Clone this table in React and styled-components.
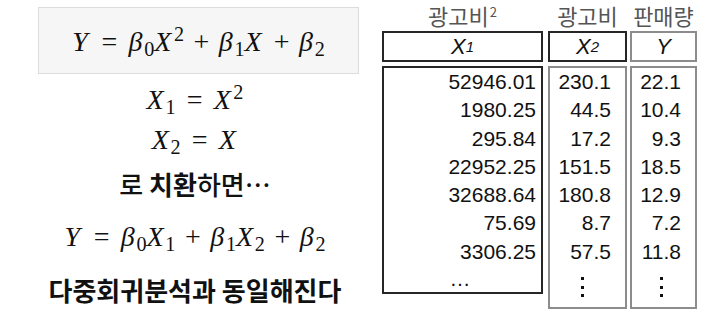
import React from 'react'
import styled, { createGlobalStyle } from 'styled-components'

const GlobalStyle = createGlobalStyle`
  body {
    margin: 0;
    background: #fff;
  }
`

const Page = styled.div`
  width: 713px;
  height: 327px;
  display: flex;
  overflow: hidden;
`

// left side: formulas and explanation
const Left = styled.div`
  width: 382px;
  display: flex;
  flex-direction: column;
  align-items: center;
  padding: 7px 0 0 8px;
  box-sizing: border-box;
`

const FormulaBox = styled.div`
  width: 321px;
  height: 67px;
  box-sizing: border-box;
  margin-left: 7px;
  background: #f6f6f6;
  border: 1px solid #dcdcdc;
  display: flex;
  align-items: center;
  justify-content: center;
  padding-top: 2px;
`

const MathLine = styled.div`
  font-family: "Liberation Serif", "DejaVu Serif", serif;
  font-size: 28px;
  color: #111;
  white-space: nowrap;
  height: ${p => p.$h}px;
  line-height: ${p => p.$h}px;
  margin-top: ${p => p.$mt || 0}px;
`

const V = styled.i`
  font-style: italic;
  margin-right: 0.09em;
`

const Sub = styled.sub`
  font-size: 0.72em;
  font-style: normal;
  vertical-align: -0.26em;
  line-height: 0;
  margin-left: -0.04em;
`

const Sup = styled.sup`
  font-size: 0.72em;
  font-style: normal;
  vertical-align: 0.52em;
  line-height: 0;
`

const Op = styled.span`
  margin: 0 ${p => (p.$rel ? '0.4em' : '0.34em')};
`

const KoLine = styled.div`
  font-family: "Noto Sans CJK KR", "Noto Sans", sans-serif;
  font-size: ${p => p.$size || 26}px;
  font-weight: ${p => p.$weight || 500};
  color: #111;
  white-space: nowrap;
  margin-top: ${p => p.$mt || 0}px;
  line-height: 1.2;
`

const Strong = styled.b`
  font-weight: 700;
`

// right side: the data table
const Table = styled.div`
  display: flex;
  align-items: flex-start;
  padding-top: 3px;
`

const Column = styled.div`
  width: ${p => p.$w}px;
  margin-left: ${p => p.$gap || 0}px;
  display: flex;
  flex-direction: column;
`

const Title = styled.div`
  height: 28px;
  line-height: 24px;
  text-align: center;
  font-family: "Noto Sans CJK KR", "Noto Sans", sans-serif;
  font-size: 22px;
  color: #555;
  white-space: nowrap;
`

const TitleSup = styled.sup`
  font-size: 13px;
  vertical-align: 8px;
  line-height: 0;
  margin-left: 1px;
`

const HeadCell = styled.div`
  height: 31px;
  box-sizing: border-box;
  border: 2px solid ${p => (p.$dark ? '#262626' : '#8c8c8c')};
  display: flex;
  align-items: center;
  justify-content: center;
  font-family: "Liberation Sans", Arial, sans-serif;
  font-style: italic;
  font-size: 22px;
  color: #111;
  padding-top: 1px;
`

const HeadSub = styled.sub`
  font-size: 15px;
  vertical-align: -5px;
  line-height: 0;
`

const Body = styled.div`
  margin-top: 4px;
  box-sizing: border-box;
  border: 2px solid ${p => (p.$dark ? '#262626' : '#8c8c8c')};
  padding: 0 ${p => p.$pr}px ${p => p.$pb || 0}px 0;
  font-family: "Liberation Sans", Arial, sans-serif;
  font-size: 21px;
  color: #111;
`

const Cell = styled.div`
  height: 28.3px;
  line-height: 28.3px;
  text-align: right;
`

const Ellipsis = styled.div`
  height: 26px;
  line-height: 26px;
  text-align: center;
`

const VDots = styled.div`
  display: flex;
  flex-direction: column;
  align-items: center;
  gap: 5.5px;
  padding: 11px 0 0 ${p => p.$pl || 0}px;

  & > span {
    width: 3px;
    height: 3px;
    background: #111;
  }
`

const cols = [
  { title: '광고비', sup: '2', head: '1', w: 161, gap: 0, pr: 5, dark: true,
    rows: ['52946.01', '1980.25', '295.84', '22952.25', '32688.64', '75.69', '3306.25'] },
  { title: '광고비', head: '2', w: 79, gap: 5, pr: 14, dark: false, headDark: true,
    rows: ['230.1', '44.5', '17.2', '151.5', '180.8', '8.7', '57.5'] },
  { title: '판매량', head: null, w: 67, gap: 3, pr: 14, dark: false,
    rows: ['22.1', '10.4', '9.3', '18.5', '12.9', '7.2', '11.8'] },
]

export default function App() {
  return (
    <Page>
      <GlobalStyle />
      <Left>
        <FormulaBox>
          <MathLine $h={40}>
            <V>Y</V><Op $rel>=</Op><V>β</V><Sub>0</Sub><V>X</V><Sup>2</Sup>
            <Op>+</Op><V>β</V><Sub>1</Sub><V>X</V><Op>+</Op><V>β</V><Sub>2</Sub>
          </MathLine>
        </FormulaBox>
        <MathLine $h={40} $mt={6}>
          <V>X</V><Sub>1</Sub><Op $rel>=</Op><V>X</V><Sup>2</Sup>
        </MathLine>
        <MathLine $h={40}>
          <V>X</V><Sub>2</Sub><Op $rel>=</Op><V>X</V>
        </MathLine>
        <KoLine $mt={8}>
          로 <Strong>치환</Strong>하면…
        </KoLine>
        <MathLine $h={40} $mt={18}>
          <V>Y</V><Op $rel>=</Op><V>β</V><Sub>0</Sub><V>X</V><Sub>1</Sub>
          <Op>+</Op><V>β</V><Sub>1</Sub><V>X</V><Sub>2</Sub><Op>+</Op><V>β</V><Sub>2</Sub>
        </MathLine>
        <KoLine $size={26} $weight={700} $mt={17}>
          다중회귀분석과 동일해진다
        </KoLine>
      </Left>

      <Table>
        {cols.map((c, i) => (
          <Column key={i} $w={c.w} $gap={c.gap}>
            <Title>
              {c.title}
              {c.sup && <TitleSup>{c.sup}</TitleSup>}
            </Title>
            <HeadCell $dark={c.dark || c.headDark}>
              {c.head ? <>X<HeadSub>{c.head}</HeadSub></> : 'Y'}
            </HeadCell>
            <Body $dark={c.dark} $pr={c.pr} $pb={c.dark ? 0 : 10}>
              {c.rows.map(r => <Cell key={r}>{r}</Cell>)}
              {c.dark ? (
                <Ellipsis>…</Ellipsis>
              ) : (
                <VDots $pl={i === 1 ? 4 : 10}>
                  <span /><span /><span />
                </VDots>
              )}
            </Body>
          </Column>
        ))}
      </Table>
    </Page>
  )
}
